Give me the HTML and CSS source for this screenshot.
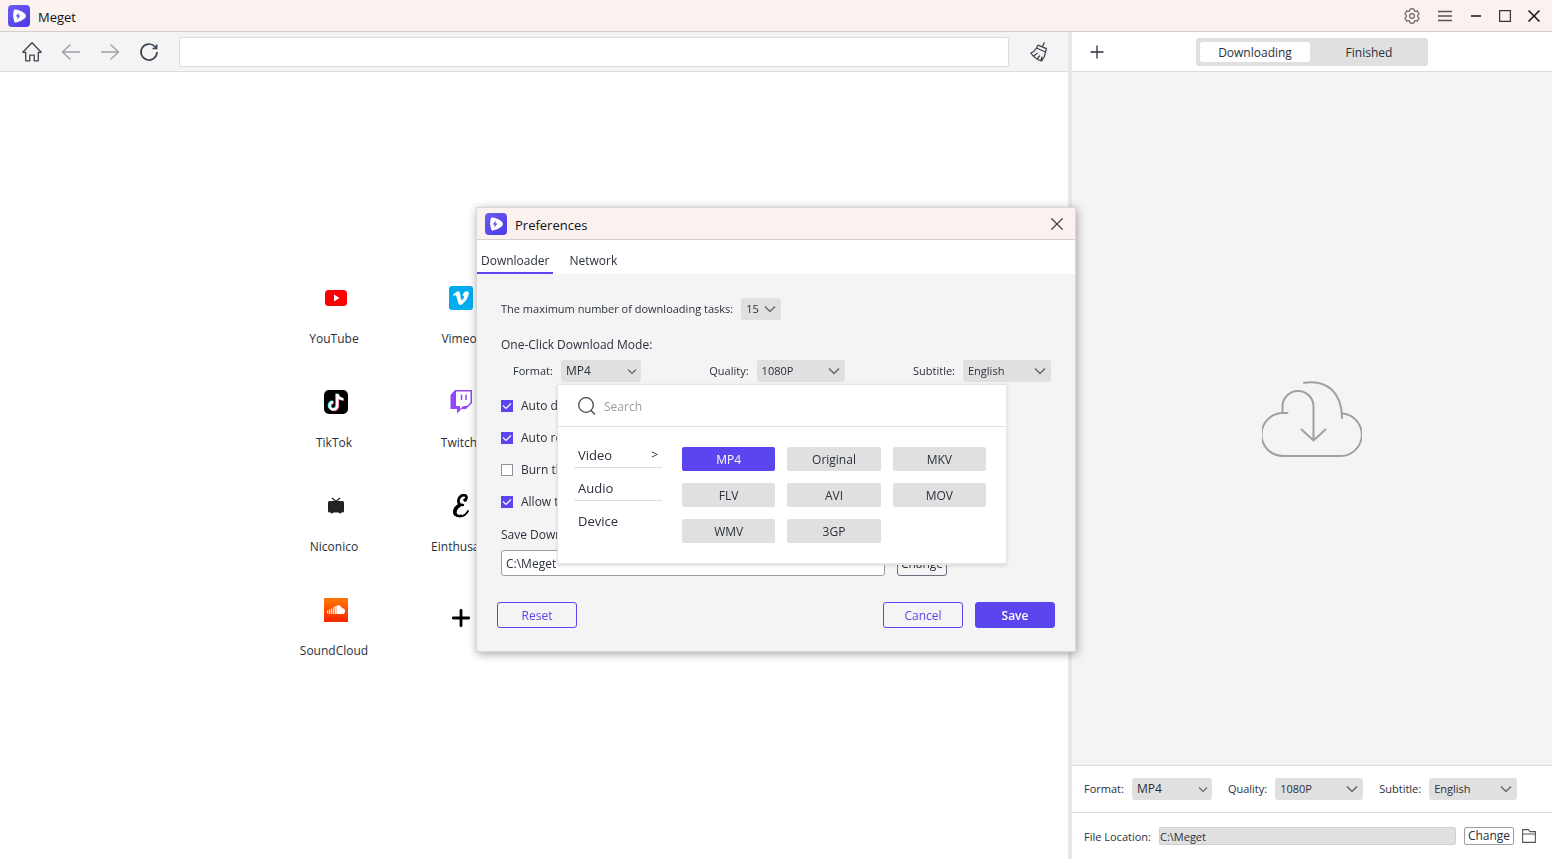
FILE: index.html
```html
<!DOCTYPE html>
<html lang="en">
<head>
<meta charset="utf-8">
<title>Meget</title>
<link rel="stylesheet" href="styles.css">
</head>
<body>
<svg class="defs" width="0" height="0" aria-hidden="true">
  <defs>
    <linearGradient id="brand" x1="0" y1="0" x2="1" y2="1"><stop offset="0" stop-color="#6d5cf0"/><stop offset="1" stop-color="#4a38e8"/></linearGradient>
    <linearGradient id="cloud" x1="0" y1="0" x2="0" y2="1"><stop offset="0" stop-color="#ff7a00"/><stop offset="1" stop-color="#ff2200"/></linearGradient>
    <symbol id="logo" viewBox="0 0 22 22">
      <rect width="22" height="22" rx="4" fill="url(#brand)"/>
      <path d="M7.300 6.300 Q12.500 6.800 16 10.300 Q16.600 11.200 15.800 12 Q12.500 15 7.800 15.800 Q6 11 7.300 6.300Z" fill="#fff" stroke="#fff" stroke-width="3.400" stroke-linejoin="round"/>
      <path d="M11 7.700 L7.600 11.600 H9.800 L9 14.800 L12.500 10.600 H10.300Z" fill="#5746ec"/>
    </symbol>
  </defs>
</svg>

<header class="titlebar">
  <svg class="logo"><use href="#logo"/></svg>
  <h1 class="app-name">Meget</h1>
  <div class="window-controls">
    <button class="icon-btn" aria-label="Settings"><svg width="16" height="16" viewBox="0 0 16 16" fill="none" stroke="#666" stroke-width="1.200" stroke-linejoin="round"><path d="M6.400 .8H9.600L10.700 3.300L13.300 2.900L15 5.900L13.400 8L15 10.100L13.300 13.100L10.700 12.700L9.600 15.200H6.400L5.300 12.700L2.700 13.100L1 10.100L2.600 8L1 5.900L2.700 2.900L5.300 3.300Z"/><circle cx="8" cy="8" r="2.400"/></svg></button>
    <button class="icon-btn" aria-label="Menu"><svg width="16" height="16" viewBox="0 0 16 16" stroke="#555" stroke-width="1.300"><path d="M1 3.500H15M1 8H15M1 12.500H15"/></svg></button>
    <button class="icon-btn" aria-label="Minimize"><svg width="12" height="12" viewBox="0 0 12 12" stroke="#000" stroke-width="1.400"><path d="M1 6H11"/></svg></button>
    <button class="icon-btn" aria-label="Maximize"><svg width="12" height="12" viewBox="0 0 12 12" fill="none" stroke="#333" stroke-width="1.200"><path d="M.6 .6H11.400V11.400H.6Z"/></svg></button>
    <button class="icon-btn" aria-label="Close"><svg width="12" height="12" viewBox="0 0 12 12" stroke="#111" stroke-width="1.500"><path d="M.5 .5L11.500 11.500M11.500 .5L.5 11.500"/></svg></button>
  </div>
</header>

<main class="workspace">
  <section class="browser">
    <div class="toolbar">
      <button class="icon-btn" aria-label="Home"><svg width="20" height="20" viewBox="0 0 20 20" fill="none" stroke="#3b4350" stroke-width="1.300" stroke-linejoin="round"><path d="M10 .8L.8 10.300H3.700V18.800H7.800V13.200H12.200V18.800H16.300V10.300H19.200Z"/></svg></button>
      <button class="icon-btn" aria-label="Back"><svg width="20" height="20" viewBox="0 0 20 20" fill="none" stroke="#9a9da5" stroke-width="1.300"><path d="M19 10H1.500M9.500 2.500L1.500 10L9.500 17.500"/></svg></button>
      <button class="icon-btn" aria-label="Forward"><svg width="20" height="20" viewBox="0 0 20 20" fill="none" stroke="#9a9da5" stroke-width="1.300"><path d="M1 10H18.500M10.500 2.500L18.500 10L10.500 17.500"/></svg></button>
      <button class="icon-btn" aria-label="Reload"><svg width="20" height="20" viewBox="0 0 20 20" fill="none" stroke="#3b4350" stroke-width="1.700"><path d="M18 10A8 8 0 1 1 15.800 4.500L17 6.200"/><path d="M17.600 2.500V6.500H13.500"/></svg></button>
      <input class="address" type="text" aria-label="Address">
      <button class="icon-btn" aria-label="Clear"><svg width="20" height="20" viewBox="0 0 20 20" fill="none" stroke="#3b4350" stroke-width="1.300" stroke-linejoin="round" stroke-linecap="round"><path d="M15.200 .8L13.600 4.600M9 3.200L17.400 6.700L16.500 10L7.500 6ZM7.500 6Q5.500 9.800 1.800 11Q5.500 16.800 12.500 19Q16 15 16.500 10M5.200 13.600L8 11.500M8.600 16.600L10.500 14M12 18L13 15"/></svg></button>
    </div>
    <nav class="sites-area">
      <ul class="sites">
        <li><a class="site" href="#"><svg width="24" height="24" viewBox="0 0 24 24"><rect x="1" y="4" width="22" height="16" rx="3.500" fill="#f00"/><path d="M10 8.500L15.500 12L10 15.500Z" fill="#fff"/></svg><span>YouTube</span></a></li>
        <li><a class="site" href="#"><svg width="24" height="24" viewBox="0 0 24 24" fill="none" stroke-width="2.500"><rect width="24" height="24" rx="5" fill="#000"/><path d="M12.500 3.500V15.500A3.800 3.800 0 1 1 8.500 11.500M12.500 4Q13.500 8.500 18.500 8.800" stroke="#25f4ee"/><path d="M14 4.500V16.500A3.800 3.800 0 1 1 9.800 12.500M14 4.500Q15 9.500 20 9.600" stroke="#fe2c55"/><path d="M13.300 4V16A3.800 3.800 0 1 1 9.200 12M13.300 4Q14.300 9 19.300 9.200" stroke="#fff"/></svg><span>TikTok</span></a></li>
        <li><a class="site" href="#"><svg width="24" height="24" viewBox="0 0 24 24" fill="#222"><rect x="4" y="7" width="16" height="11.500" rx="1.500"/><path d="M8 4L12 7.500L16 4" fill="none" stroke="#222" stroke-width="1.300"/><path d="M6.500 18H9.500L8 20ZM14.500 18H17.500L16 20Z"/></svg><span>Niconico</span></a></li>
        <li><a class="site" href="#"><svg width="24" height="24" viewBox="0 0 24 24"><rect width="24" height="24" fill="url(#cloud)"/><path d="M3.700 12.500V15.500M5.700 11.500V16M7.700 10.500V16M9.700 9V16M11.400 8V16" stroke="#fff" stroke-width="1.100"/><path d="M12.300 7.800Q16.500 5.800 18 10.300Q21 10 21 13.200Q20.800 16 18.500 16H12.300Z" fill="#fff"/></svg><span>SoundCloud</span></a></li>
        <li><a class="site" href="#"><svg width="24" height="24" viewBox="0 0 24 24"><rect width="24" height="24" rx="3" fill="#00adef"/><path d="M4 8.800L8 5.500Q10.400 4.300 11 7.500Q12 14.500 13 14.200Q14 13.800 15 11.200Q15.600 9.200 13.400 10Q14.500 5.300 18 5.300Q20.500 5.500 19.500 9.200Q18 14 13.500 18Q10.500 20.200 9.300 17L7.300 10Q6.800 8.500 4.800 10Z" fill="#fff"/></svg><span>Vimeo</span></a></li>
        <li><a class="site" href="#"><svg width="24" height="24" viewBox="0 0 24 24"><path d="M6 0H23V13L17 19H12.500L8 23.500V19H1.500V5Z" fill="#9146ff"/><path d="M7 1.500H21.500V12.500L18 16H14.500L11 19V16H7Z" fill="#fff"/><path d="M12.500 4.500V10M17 4.500V10" stroke="#9146ff" stroke-width="1.500"/></svg><span>Twitch</span></a></li>
        <li><a class="site" href="#"><svg width="24" height="24" viewBox="0 0 24 24" fill="none" stroke="#000" stroke-linecap="round"><path d="M16.500 6Q18.500 3.500 16.500 1.500Q13 .2 10.500 3.500Q8 8 11 10.500L13.800 11" stroke-width="2.700"/><path d="M13 11Q7 10.500 5.200 16Q4.500 22.300 11 22.500Q16 22.500 19 17" stroke-width="1.700"/><path d="M10 11.800Q4.500 15.500 6.300 20" stroke-width="3.500"/><path d="M7 21Q9 22.500 12 21.800" stroke-width="2.500"/><circle cx="16" cy="6" r="1.800" fill="#000" stroke="none"/></svg><span>Einthusan</span></a></li>
        <li><a class="site site-add" href="#" aria-label="Add site"><svg width="24" height="24" viewBox="0 0 24 24" stroke="#000" stroke-width="2.800" stroke-linecap="round"><path d="M12 4.300V19.700M4.300 12H19.700"/></svg></a></li>
      </ul>
    </nav>
  </section>

  <aside class="downloads">
    <div class="downloads-head">
      <button class="icon-btn add" aria-label="Add download"><svg width="14" height="14" viewBox="0 0 14 14" stroke="#2a303c" stroke-width="1.300"><path d="M7 .5V13.500M.5 7H13.500"/></svg></button>
      <div class="segmented">
        <button class="segment is-active">Downloading</button>
        <button class="segment">Finished</button>
      </div>
    </div>
    <div class="empty">
      <svg width="100" height="78" viewBox="0 0 100 78" fill="none" stroke="#a0a0a0" stroke-width="2" stroke-linecap="round"><path d="M25.500 33H21A21.500 21.500 0 0 0 21 76H79A21.300 21.300 0 0 0 80.500 33.500"/><path d="M20.500 32V26.500A15.500 15.500 0 0 1 51.500 26.500V60.500M39.500 49.500L51.500 60.500L63.500 49.500M42 2.800C65 -1 80 13 80 38"/></svg>
    </div>
    <div class="options">
      <label class="field">Format: <select class="select select-m select-text"><option>MP4</option></select></label>
      <label class="field">Quality: <select class="select select-l"><option>1080P</option></select></label>
      <label class="field">Subtitle: <select class="select select-l"><option>English</option></select></label>
    </div>
    <div class="location">
      <label class="location-label" for="file-location">File Location:</label>
      <input class="location-path" id="file-location" type="text" value="C:\Meget" readonly>
      <button class="change-sm">Change</button>
      <button class="icon-btn" aria-label="Open folder"><svg width="14" height="14" viewBox="0 0 14 14" fill="none" stroke="#555" stroke-width="1.100"><path d="M.6 13.400V.6H6.500L8 2.600H13.400V13.400ZM.6 5H13.400"/></svg></button>
    </div>
  </aside>
</main>

<div class="overlay">
  <section class="dialog" role="dialog" aria-labelledby="prefs-title">
    <header class="dialog-head">
      <svg class="logo"><use href="#logo"/></svg>
      <h2 class="dialog-title" id="prefs-title">Preferences</h2>
      <button class="icon-btn dialog-close" aria-label="Close preferences"><svg width="12" height="12" viewBox="0 0 12 12" stroke="#444" stroke-width="1.300"><path d="M.4 .4L11.600 11.600M11.600 .4L.4 11.600"/></svg></button>
    </header>
    <div class="tabs">
      <button class="tab is-active">Downloader</button>
      <button class="tab">Network</button>
    </div>
    <div class="dialog-body">
      <label class="field tasks">The maximum number of downloading tasks: <select class="select select-s"><option>15</option></select></label>
      <p class="caption">One-Click Download Mode:</p>
      <div class="mode">
        <div class="format-field">
          <label class="field">Format: <select class="select select-m select-text"><option>MP4</option></select></label>
          <div class="picker">
            <div class="search">
              <svg width="18" height="18" viewBox="0 0 18 18" fill="none" stroke="#3f4652" stroke-width="1.300"><circle cx="8" cy="8" r="7.300"/><path d="M13 13.500L17 17.500"/></svg>
              <input class="search-input" type="search" placeholder="Search" aria-label="Search formats">
            </div>
            <div class="picker-body">
              <div class="categories">
                <button class="category is-active"><span>Video</span><span class="arrow">&gt;</span></button>
                <button class="category">Audio</button>
                <button class="category">Device</button>
              </div>
              <div class="formats">
                <button class="format is-active">MP4</button>
                <button class="format">Original</button>
                <button class="format">MKV</button>
                <button class="format">FLV</button>
                <button class="format">AVI</button>
                <button class="format">MOV</button>
                <button class="format">WMV</button>
                <button class="format">3GP</button>
              </div>
            </div>
          </div>
        </div>
        <label class="field">Quality: <select class="select select-l"><option>1080P</option></select></label>
        <label class="field">Subtitle: <select class="select select-l"><option>English</option></select></label>
      </div>
      <div class="checks">
        <label class="check"><input type="checkbox" checked>Auto download</label>
        <label class="check"><input type="checkbox" checked>Auto resume</label>
        <label class="check"><input type="checkbox">Burn then</label>
        <label class="check"><input type="checkbox" checked>Allow to</label>
      </div>
      <label class="caption" for="save-path">Save Down to:</label>
      <div class="save-row">
        <input class="save-path" id="save-path" type="text" value="C:\Meget">
        <button class="change">Change</button>
      </div>
      <footer class="actions">
        <button class="btn">Reset</button>
        <button class="btn push">Cancel</button>
        <button class="btn btn-primary">Save</button>
      </footer>
    </div>
  </section>
</div>
</body>
</html>
```
FILE: styles.css
```css
:root {
  --accent: #5b45ee;
  --ink: #2a303c;
  --panel: #f4f4f4;
  --fill: #e0e0e0;
  --line: #dcdcdc;
}

* { box-sizing: border-box; }

html, body { height: 100%; }

body {
  margin: 0;
  display: flex;
  flex-direction: column;
  background: #fff;
  color: var(--ink);
  font: 12px/16px "Open Sans", "Noto Sans", sans-serif;
  overflow: hidden;
}

h1, h2, p, ul { margin: 0; padding: 0; }
ul { list-style: none; }
svg { display: block; flex: none; }
.defs { position: absolute; }

button, input, select { font: inherit; color: inherit; }
button { padding: 2px 0 0; border: 0; background: none; white-space: nowrap; }
input { min-width: 0; }

.icon-btn { display: grid; place-items: center; flex: none; padding: 0; }
.logo { width: 22px; height: 22px; }

/* Title bar */
.titlebar {
  display: flex;
  align-items: center;
  gap: 8px;
  height: 32px;
  flex: none;
  padding: 0 12px 0 8px;
  background: #fbf2ef;
  border-bottom: 1px solid #d2cfce;
}
.app-name, .dialog-title { padding-top: 2px; font-size: 13px; font-weight: 400; line-height: 20px; color: #111; }
.window-controls { display: flex; align-items: center; gap: 17px; margin-left: auto; }

/* Workspace */
.workspace { flex: 1; min-height: 0; display: grid; grid-template-columns: minmax(0, 1fr) 484px; }
.browser { display: flex; flex-direction: column; min-height: 0; }
.toolbar {
  display: flex;
  align-items: center;
  gap: 19px;
  height: 40px;
  flex: none;
  padding: 0 19px 0 22px;
  background: var(--panel);
  border-bottom: 1px solid var(--line);
}
.address {
  flex: 1;
  height: 30px;
  margin: 0 1px 0 1px;
  border: 1px solid var(--line);
  border-radius: 2px;
  background: #fff;
}
.sites-area { flex: 1; display: grid; place-content: center; }
.sites {
  display: grid;
  grid-template: repeat(4, 104px) / repeat(4, 100px);
  grid-auto-flow: column;
  column-gap: 25px;
  padding-right: 25px;
}
.site {
  display: flex;
  flex-direction: column;
  align-items: center;
  gap: 21px;
  padding-top: 28px;
  color: inherit;
  font-weight: 500;
  text-decoration: none;
}
.site svg { margin-left: 4px; }
.site-add { padding-top: 36px; }

/* Downloads panel */
.downloads { display: flex; flex-direction: column; border-left: 4px solid #e8e8e8; }
.downloads-head {
  display: grid;
  grid-template-columns: 1fr auto 1fr;
  align-items: center;
  height: 40px;
  flex: none;
  padding: 0 18px;
  border-bottom: 1px solid var(--line);
}
.add { justify-self: start; }
.segmented { display: flex; gap: 4px; padding: 4px; border-radius: 3px; background: var(--fill); }
.segment { width: 110px; height: 20px; border-radius: 3px; }
.segment.is-active { background: #fff; font-weight: 500; }
.empty { flex: 1; display: grid; place-content: center; background: var(--panel); border-bottom: 1px solid var(--line); }
.options { display: flex; align-items: center; gap: 16px; height: 47px; flex: none; padding: 0 12px; border-bottom: 1px solid var(--line); }
.location { display: flex; align-items: center; gap: 8px; height: 46px; flex: none; padding: 0 16px 0 12px; }
.location-label { padding-top: 2px; font-size: 11px; }
.location-path { flex: 1; height: 18px; padding: 0; border: 1px solid #d0d0d0; border-radius: 2px; background: var(--fill); font-size: 11px; }
.change-sm { width: 50px; height: 18px; padding-top: 0; border: 1px solid #9a9da5; border-radius: 2px; background: #fff; }

/* Form fields */
.field { display: flex; align-items: center; gap: 8px; font-size: 11px; white-space: nowrap; }
.select {
  appearance: none;
  height: 22px;
  padding: 0 5px;
  border: 0;
  border-radius: 3px;
  font-size: 11px;
  background: var(--fill) url("data:image/svg+xml,%3Csvg xmlns='http://www.w3.org/2000/svg' width='12' height='8' fill='none' stroke='%23666' stroke-width='1.500'%3E%3Cpath d='M1 1.500L6 6.500L11 1.500'/%3E%3C/svg%3E") no-repeat right 5px center;
}
.select-s { width: 40px; }
.select-m { width: 80px; }
.select-l { width: 88px; }
.select-text {
  font-size: 12px;
  background-image: url("data:image/svg+xml,%3Csvg xmlns='http://www.w3.org/2000/svg' width='10' height='7' fill='none' stroke='%23666' stroke-width='1.200'%3E%3Cpath d='M1 1.500L5 5.500L9 1.500'/%3E%3C/svg%3E");
  background-position: right 4px center;
}

/* Preferences dialog */
.overlay { position: fixed; inset: 0; display: grid; place-content: center; }
.dialog {
  width: 600px;
  border: 1px solid #d8d8d8;
  background: var(--panel);
  box-shadow: 1px 2px 9px rgba(0, 0, 0, .35);
}
.dialog-head {
  display: flex;
  align-items: center;
  gap: 8px;
  height: 32px;
  padding: 0 12px 0 8px;
  background: #fbf2ef;
  border-bottom: 1px solid #d2cfce;
}
.dialog-close { margin-left: auto; }
.tabs { display: flex; gap: 12px; height: 34px; background: #fff; }
.tab { padding: 9px 4px 0; border-bottom: 2px solid transparent; }
.tab.is-active { border-color: var(--accent); font-weight: 500; }
.dialog-body { padding: 24px 20px 23px; }
.tasks, .caption, .checks, .save-row { margin-left: 4px; }
.caption { display: block; }
p.caption { margin-top: 17px; }
.mode { display: flex; justify-content: space-between; margin: 7px 4px 0 16px; }
.format-field { position: relative; }
.checks { display: grid; gap: 16px; margin-top: 16px; margin-bottom: 17px; }
.check { display: flex; align-items: center; gap: 8px; }
.check input {
  appearance: none;
  width: 12px;
  height: 12px;
  margin: 0;
  border: 1px solid #8f939c;
  background: #fff;
}
.check input:checked {
  border-color: var(--accent);
  background: var(--accent) url("data:image/svg+xml,%3Csvg xmlns='http://www.w3.org/2000/svg' width='10' height='10' fill='none' stroke='white' stroke-width='1.200'%3E%3Cpath d='M1 4.500L4 7.500L9 2.500'/%3E%3C/svg%3E") no-repeat center;
}
.save-row { display: flex; gap: 12px; margin-top: 7px; }
.save-path { width: 384px; height: 26px; padding: 0 4px; border: 1px solid #9a9da5; border-radius: 3px; background: #fff; }
.change { width: 50px; height: 26px; border: 1px solid #6b7080; border-radius: 3px; }
.actions { display: flex; gap: 12px; margin-top: 26px; }
.btn { width: 80px; height: 26px; border: 1px solid var(--accent); border-radius: 3px; color: var(--accent); font-weight: 500; }
.btn-primary { background: var(--accent); color: #fff; font-weight: 600; }
.push { margin-left: auto; }

/* Format picker */
.picker {
  position: absolute;
  top: 24px;
  left: 44px;
  z-index: 1;
  width: 450px;
  border: 1px solid #e4e4e4;
  border-bottom-width: 2px;
  background: #fff;
  box-shadow: 0 1px 3px rgba(0, 0, 0, .12);
}
.search { display: flex; align-items: center; gap: 8px; height: 42px; padding: 0 20px; border-bottom: 1px solid #e2e2e2; }
.search-input { flex: 1; padding: 2px 0 0; border: 0; outline: 0; background: none; }
.search-input::placeholder { color: #9a9da5; }
.picker-body { display: grid; grid-template-columns: 88px 1fr; gap: 20px; padding: 20px 20px 20px 16px; }
.categories { display: flex; flex-direction: column; margin-top: -12px; }
.category { display: flex; justify-content: space-between; align-items: center; height: 33px; padding: 8px 4px 0; border-bottom: 1px solid var(--line); font-size: 13px; }
.category:last-child { border-bottom-color: transparent; }
.category.is-active { font-weight: 500; }
.arrow { font-size: 12px; }
.formats { display: grid; grid-template-columns: repeat(3, 1fr); gap: 12px; align-content: start; }
.format { height: 24px; border-radius: 2px; background: var(--fill); }
.format.is-active { background: var(--accent); color: #fff; font-weight: 500; }
```
